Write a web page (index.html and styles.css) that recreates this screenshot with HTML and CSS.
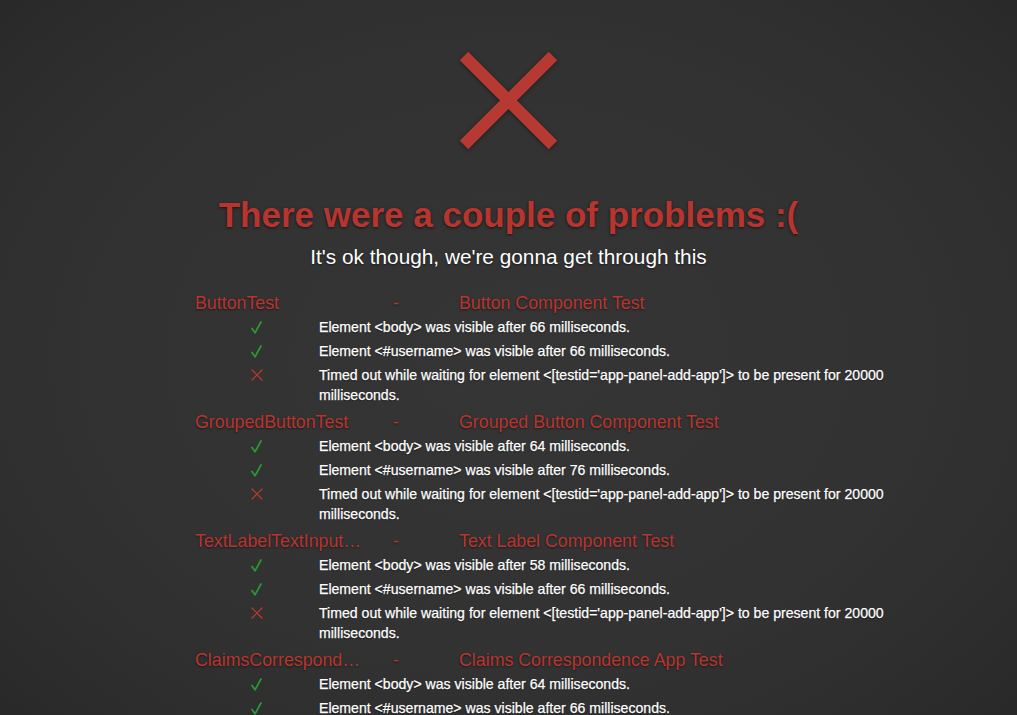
FILE: index.html
```html
<!DOCTYPE html>
<html lang="en">
<head>
<meta charset="utf-8">
<title>Test results</title>
<link rel="stylesheet" href="styles.css">
</head>
<body>
<main class="page">
  <svg class="fail-icon" width="100" height="100" viewBox="0 0 100 100" aria-hidden="true">
    <line x1="5" y1="5" x2="94" y2="94"/>
    <line x1="94" y1="5" x2="5" y2="94"/>
  </svg>
  <h1 class="title">There were a couple of problems :(</h1>
  <p class="subtitle">It's ok though, we're gonna get through this</p>

  <section class="results">
    <div class="suite">
      <div class="suite-head"><span class="suite-name">ButtonTest</span><span class="suite-dash">-</span><span class="suite-desc">Button Component Test</span></div>
      <ul class="checks">
        <li class="check pass"><span class="check-icon"><svg width="11" height="13" viewBox="0 0 11 13"><path d="M1 7.5 L4 11.8 L10 1"/></svg></span><span class="check-msg">Element &lt;body&gt; was visible after 66 milliseconds.</span></li>
        <li class="check pass"><span class="check-icon"><svg width="11" height="13" viewBox="0 0 11 13"><path d="M1 7.5 L4 11.8 L10 1"/></svg></span><span class="check-msg">Element &lt;#username&gt; was visible after 66 milliseconds.</span></li>
        <li class="check fail"><span class="check-icon"><svg width="12" height="12" viewBox="0 0 12 12"><path d="M1 1 L11 11 M11 1 L1 11"/></svg></span><span class="check-msg">Timed out while waiting for element &lt;[testid='app-panel-add-app']&gt; to be present for 20000 milliseconds.</span></li>
      </ul>
    </div>
    <div class="suite">
      <div class="suite-head"><span class="suite-name">GroupedButtonTest</span><span class="suite-dash">-</span><span class="suite-desc">Grouped Button Component Test</span></div>
      <ul class="checks">
        <li class="check pass"><span class="check-icon"><svg width="11" height="13" viewBox="0 0 11 13"><path d="M1 7.5 L4 11.8 L10 1"/></svg></span><span class="check-msg">Element &lt;body&gt; was visible after 64 milliseconds.</span></li>
        <li class="check pass"><span class="check-icon"><svg width="11" height="13" viewBox="0 0 11 13"><path d="M1 7.5 L4 11.8 L10 1"/></svg></span><span class="check-msg">Element &lt;#username&gt; was visible after 76 milliseconds.</span></li>
        <li class="check fail"><span class="check-icon"><svg width="12" height="12" viewBox="0 0 12 12"><path d="M1 1 L11 11 M11 1 L1 11"/></svg></span><span class="check-msg">Timed out while waiting for element &lt;[testid='app-panel-add-app']&gt; to be present for 20000 milliseconds.</span></li>
      </ul>
    </div>
    <div class="suite">
      <div class="suite-head"><span class="suite-name">TextLabelTextInputTest</span><span class="suite-dash">-</span><span class="suite-desc">Text Label Component Test</span></div>
      <ul class="checks">
        <li class="check pass"><span class="check-icon"><svg width="11" height="13" viewBox="0 0 11 13"><path d="M1 7.5 L4 11.8 L10 1"/></svg></span><span class="check-msg">Element &lt;body&gt; was visible after 58 milliseconds.</span></li>
        <li class="check pass"><span class="check-icon"><svg width="11" height="13" viewBox="0 0 11 13"><path d="M1 7.5 L4 11.8 L10 1"/></svg></span><span class="check-msg">Element &lt;#username&gt; was visible after 66 milliseconds.</span></li>
        <li class="check fail"><span class="check-icon"><svg width="12" height="12" viewBox="0 0 12 12"><path d="M1 1 L11 11 M11 1 L1 11"/></svg></span><span class="check-msg">Timed out while waiting for element &lt;[testid='app-panel-add-app']&gt; to be present for 20000 milliseconds.</span></li>
      </ul>
    </div>
    <div class="suite">
      <div class="suite-head"><span class="suite-name">ClaimsCorrespondenceTest</span><span class="suite-dash">-</span><span class="suite-desc">Claims Correspondence App Test</span></div>
      <ul class="checks">
        <li class="check pass"><span class="check-icon"><svg width="11" height="13" viewBox="0 0 11 13"><path d="M1 7.5 L4 11.8 L10 1"/></svg></span><span class="check-msg">Element &lt;body&gt; was visible after 64 milliseconds.</span></li>
        <li class="check pass"><span class="check-icon"><svg width="11" height="13" viewBox="0 0 11 13"><path d="M1 7.5 L4 11.8 L10 1"/></svg></span><span class="check-msg">Element &lt;#username&gt; was visible after 66 milliseconds.</span></li>
        <li class="check fail"><span class="check-icon"><svg width="12" height="12" viewBox="0 0 12 12"><path d="M1 1 L11 11 M11 1 L1 11"/></svg></span><span class="check-msg">Timed out while waiting for element &lt;[testid='app-panel-add-app']&gt; to be present for 20000 milliseconds.</span></li>
      </ul>
    </div>
  </section>
</main>
</body>
</html>
```

FILE: styles.css
```css
html, body {
  margin: 0;
  height: 100%;
}

body {
  overflow: hidden;
  font-family: "Liberation Sans", Arial, Helvetica, sans-serif;
  color: #ffffff;
  background: radial-gradient(ellipse 75% 80% at 50% 50%, #353535 0%, #323232 55%, #2b2b2b 85%, #262626 100%);
}

.page {
  display: flex;
  flex-direction: column;
  align-items: center;
  padding-top: 51px;
}

.fail-icon {
  display: block;
  stroke: #b63932;
  stroke-width: 12;
  stroke-linecap: butt;
  filter: drop-shadow(0 1px 2px rgba(0, 0, 0, 0.45));
}

.title {
  margin: 44px 0 0;
  font-size: 35px;
  line-height: 40px;
  font-weight: bold;
  color: #b8352f;
  text-shadow: 0 1px 3px rgba(0, 0, 0, 0.6);
}

.subtitle {
  margin: 10px 0 0;
  font-size: 20.8px;
  line-height: 24px;
  color: #ffffff;
  text-shadow: 0 1px 2px rgba(0, 0, 0, 0.5);
}

.results {
  align-self: stretch;
  padding: 22px 0 0 195px;
}

.suite-head {
  display: grid;
  grid-template-columns: 198px 66px auto;
  font-size: 17.8px;
  line-height: 24px;
  color: #b8352f;
  text-shadow: 0 1px 2px rgba(0, 0, 0, 0.5);
}

.suite-name {
  max-width: 168px;
  overflow: hidden;
  white-space: nowrap;
  text-overflow: ellipsis;
}

.checks {
  list-style: none;
  margin: 0;
  padding: 0 0 3px 56px;
}

.check {
  display: grid;
  grid-template-columns: 68px 600px;
  padding: 2px 0;
  font-size: 14.1px;
  line-height: 20px;
}

.check-icon {
  display: flex;
  align-items: center;
  height: 20px;
}

.check-icon svg {
  fill: none;
  stroke-linecap: round;
  stroke-linejoin: round;
}

.pass .check-icon svg {
  stroke: #2c9a34;
  stroke-width: 1.7;
}

.fail .check-icon svg {
  stroke: #c0392b;
  stroke-width: 1.2;
}

.check-msg {
  color: #ffffff;
  -webkit-text-stroke: 0.25px #ffffff;
  text-shadow: 0 1px 1px rgba(0, 0, 0, 0.6);
}
```
